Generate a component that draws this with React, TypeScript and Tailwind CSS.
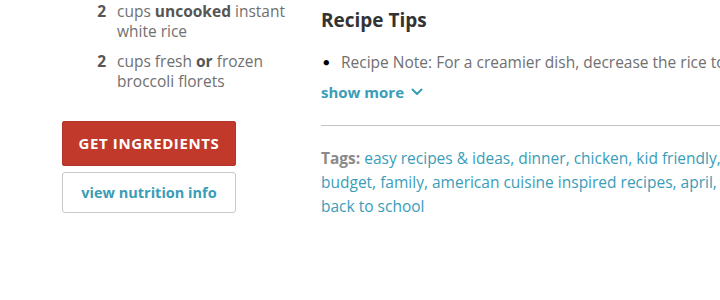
import React from "react";

export default function App() {
  const font = { fontFamily: "'Open Sans', Lato, sans-serif" };
  return (
    <div className="w-[720px] h-[300px] overflow-hidden bg-white flex" style={font}>
      <div className="w-[321px] shrink-0 pl-[62px] flex flex-col">
        <div className="flex flex-col gap-[10px] pt-[1px] text-[15.5px] leading-[20px] text-[#707070]">
          <div className="flex">
            <span className="w-[55px] shrink-0 text-right pr-[11px] font-bold text-[#555]">2</span>
            <span className="w-[172px]">cups <b className="text-[#555]">uncooked</b> instant white rice</span>
          </div>
          <div className="flex">
            <span className="w-[55px] shrink-0 text-right pr-[11px] font-bold text-[#555]">2</span>
            <span className="w-[172px]">cups fresh <b className="text-[#555]">or</b> frozen broccoli florets</span>
          </div>
        </div>
        <button className="mt-[30px] h-[45px] w-[174px] rounded-[2px] bg-[#c0392b] text-white font-bold text-[15px] tracking-[0.6px] border border-[#b3352a]">
          GET INGREDIENTS
        </button>
        <button className="mt-[6px] h-[41px] w-[174px] rounded-[3px] bg-white border border-[#c8c8c8] text-[#3a9db8] font-bold text-[14.5px]">
          view nutrition info
        </button>
      </div>
      <div className="flex-1 flex flex-col min-w-0">
        <h2 className="mt-[6px] text-[19px] leading-[28px] font-bold text-[#333]">Recipe Tips</h2>
        <div className="mt-[17px] flex items-center text-[15.5px] leading-[22px] text-[#707070] whitespace-nowrap">
          <span className="w-[20px] shrink-0 pl-[2px] text-black text-[11px]">●</span>
          <span>Recipe Note: For a creamier dish, decrease the rice to</span>
        </div>
        <div className="mt-[9px] flex items-center gap-[7px] text-[15px] font-bold text-[#3a9db8] leading-[20px]">
          <span>show more</span>
          <svg width="12" height="8" viewBox="0 0 12 8" fill="none" stroke="#3a9db8" strokeWidth="2" strokeLinecap="round" strokeLinejoin="round">
            <path d="M1.5 1.5 L6 6 L10.5 1.5" />
          </svg>
        </div>
        <div className="mt-[23px] h-px bg-[#c4c4c4] w-[420px]" />
        <div className="mt-[20px] text-[15.5px] leading-[24px] text-[#3a9db8] whitespace-nowrap">
          <div><span className="font-bold text-[#8a8a8a]">Tags:</span> easy recipes &amp; ideas, dinner, chicken, kid friendly,</div>
          <div>budget, family, american cuisine inspired recipes, april,</div>
          <div>back to school</div>
        </div>
      </div>
    </div>
  );
}
